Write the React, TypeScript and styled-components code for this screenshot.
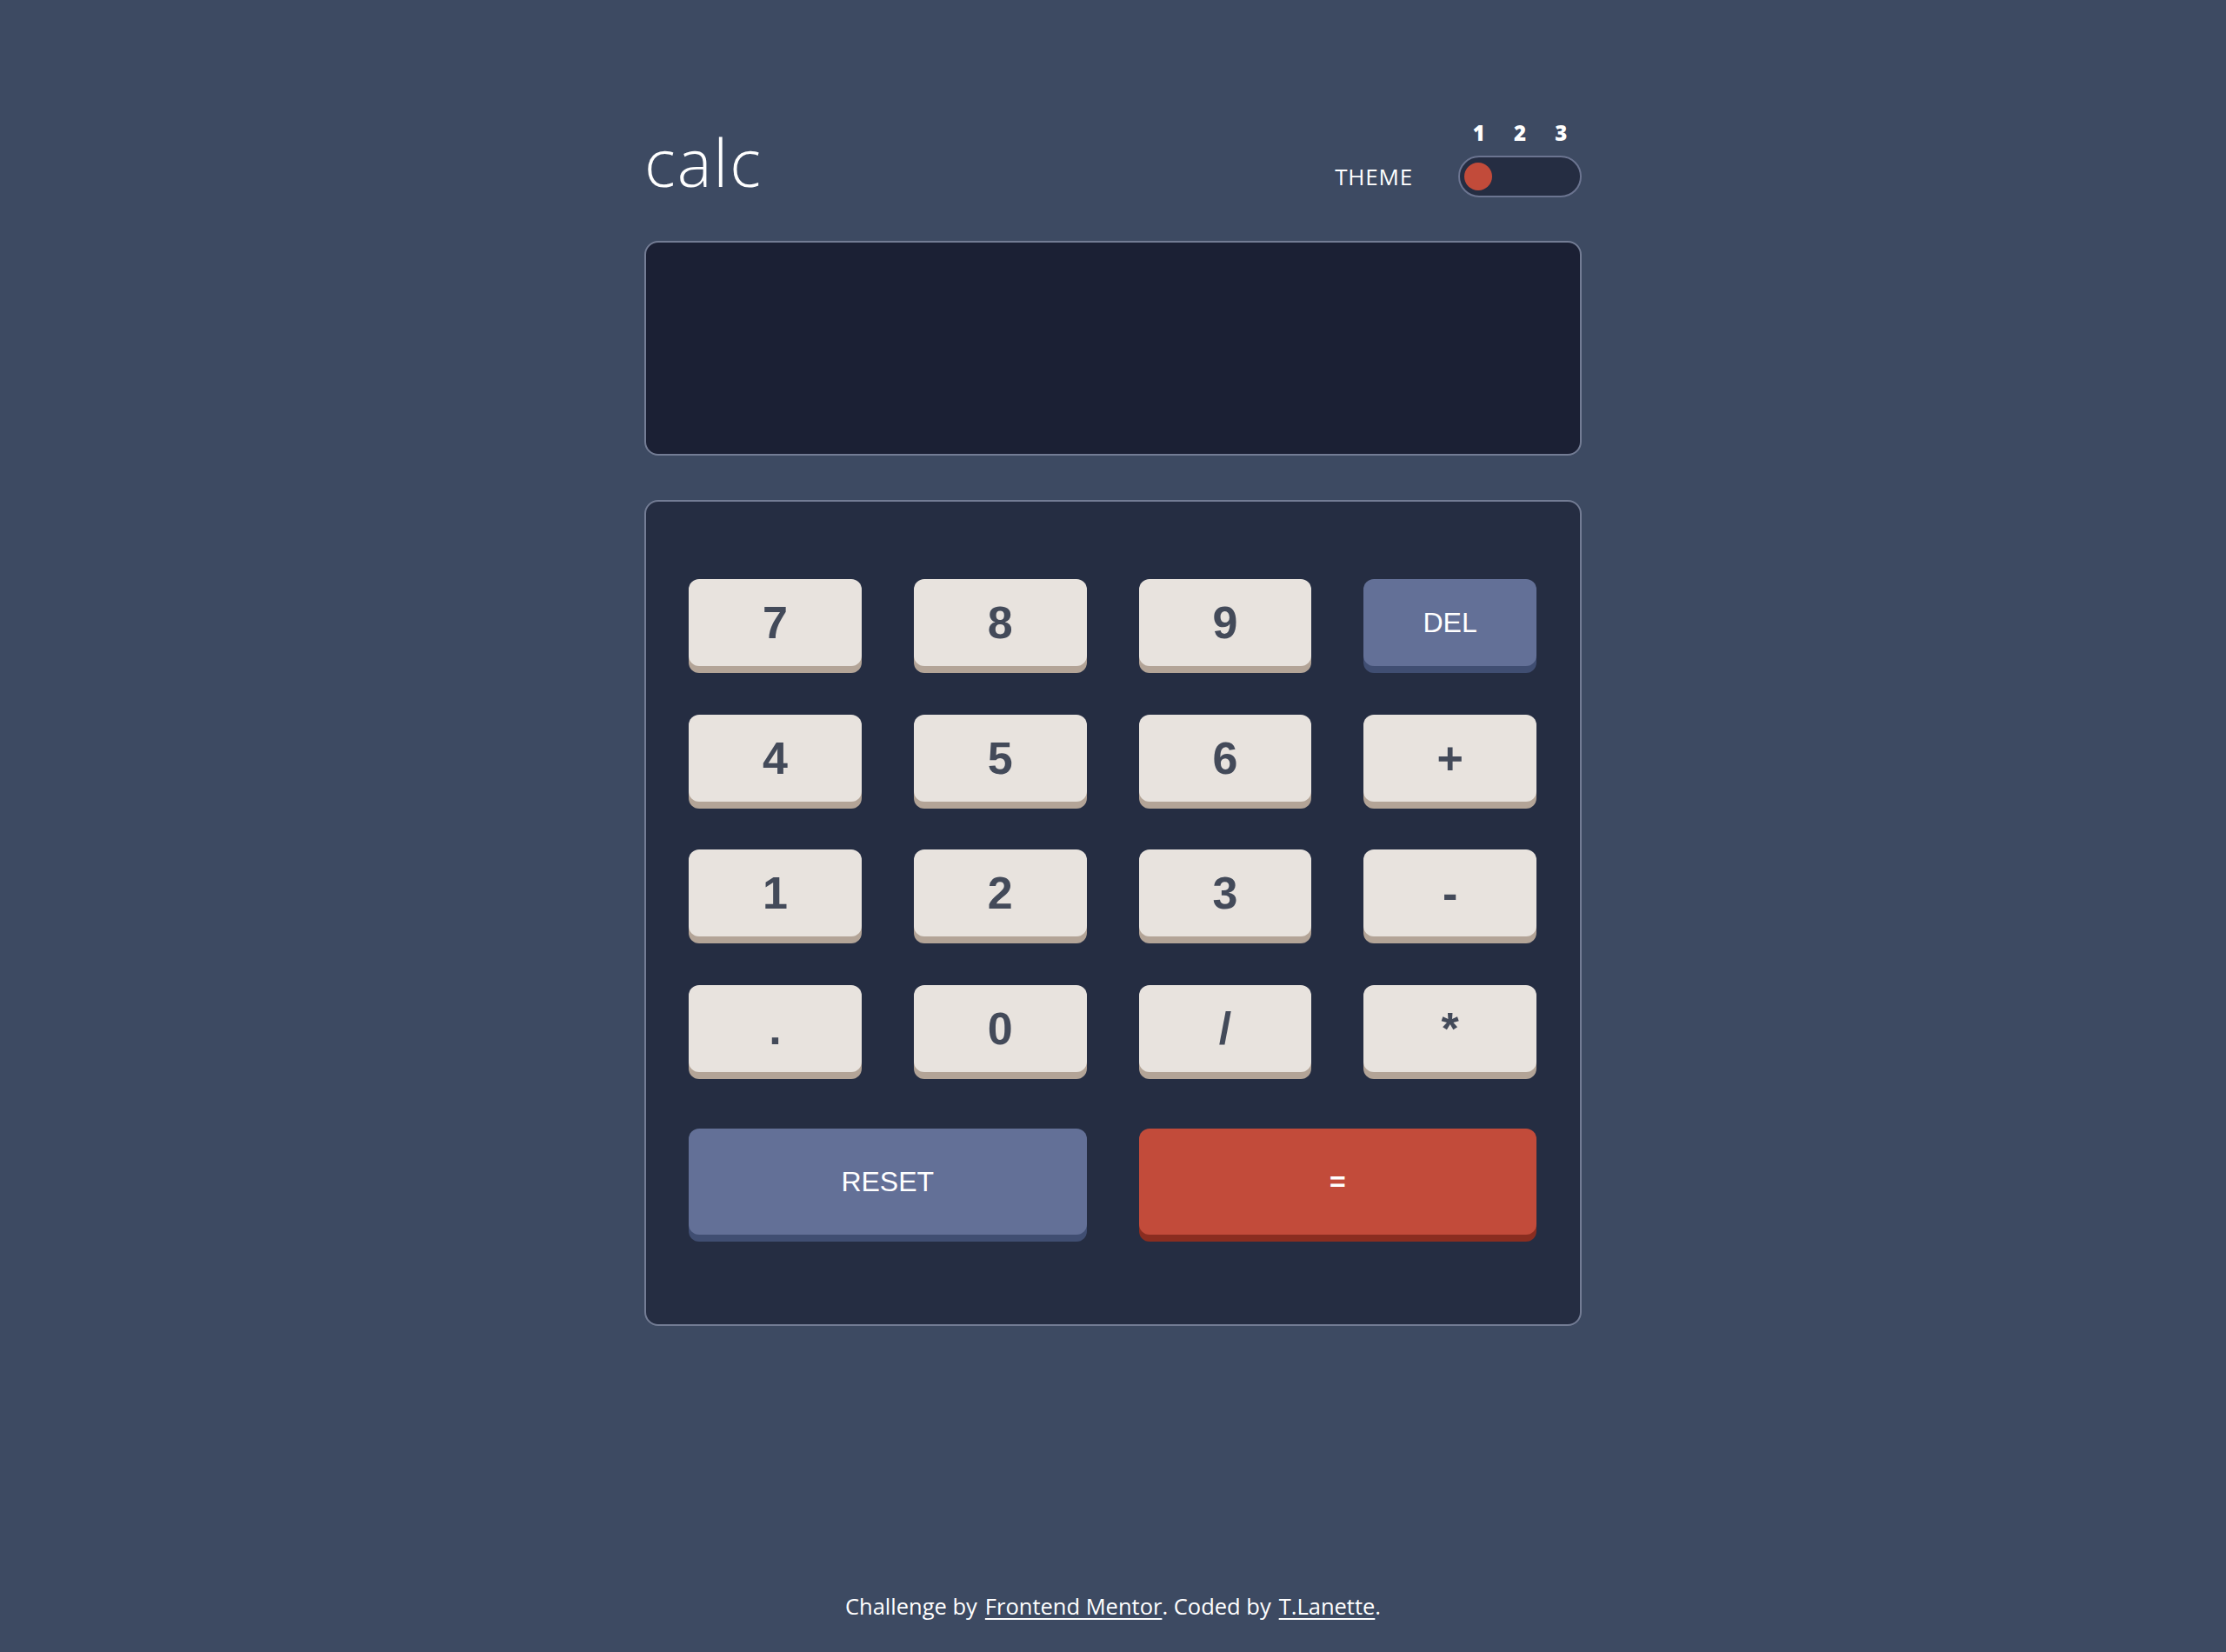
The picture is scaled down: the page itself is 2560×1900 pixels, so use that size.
import React from "react";
import styled, { createGlobalStyle } from "styled-components";

const GlobalStyle = createGlobalStyle`
  html, body {
    margin: 0;
    padding: 0;
    background: #3d4a62;
  }
  body {
    font-family: "Open Sans", "Liberation Sans", sans-serif;
    color: #ffffff;
  }
  * { box-sizing: border-box; }
`;

const Page = styled.div`
  display: flex;
  flex-direction: column;
  align-items: center;
  min-height: 1900px;
  background: #3d4a62;
`;

const Main = styled.main`
  width: 1078px;
  padding-top: 141px;
  display: flex;
  flex-direction: column;
`;

const Header = styled.header`
  display: flex;
  justify-content: space-between;
  align-items: flex-end;
  margin-bottom: 50px;
`;

const Logo = styled.h1`
  margin: 0 0 3px 0;
  font-family: "Open Sans", sans-serif;
  font-weight: 300;
  font-size: 75px;
  line-height: 75px;
  letter-spacing: 2px;
  color: #ffffff;
`;

const ThemeBox = styled.div`
  display: flex;
  align-items: flex-end;
  gap: 52px;
`;

const ThemeLabel = styled.span`
  font-family: "Open Sans", sans-serif;
  font-size: 26px;
  font-weight: 400;
  letter-spacing: 0.8px;
  height: 48px;
  line-height: 48px;
  color: #ffffff;
`;

const SwitchCol = styled.div`
  display: flex;
  flex-direction: column;
  width: 142px;
`;

const Numbers = styled.div`
  display: grid;
  grid-template-columns: repeat(3, 1fr);
  margin-bottom: 14px;
`;

const Num = styled.span`
  text-align: center;
  font-family: "Open Sans", sans-serif;
  font-weight: 800;
  font-size: 24px;
  line-height: 24px;
  color: #ffffff;
`;

const Track = styled.div`
  height: 48px;
  border-radius: 24px;
  border: 2px solid #6b7490;
  background: #252d42;
  display: flex;
  align-items: center;
  padding-left: 5px;
`;

const Knob = styled.div`
  width: 32px;
  height: 32px;
  border-radius: 50%;
  background: #c24b3a;
`;

const Screen = styled.div`
  height: 247px;
  border-radius: 16px;
  border: 2px solid #737c94;
  background: #1b2034;
  margin-bottom: 51px;
`;

const Keypad = styled.div`
  height: 950px;
  border-radius: 16px;
  border: 2px solid #737c94;
  background: #252d42;
  padding: 89px 50px 0 49px;
  display: grid;
  grid-template-columns: repeat(4, 1fr);
  grid-template-rows: repeat(4, 100px) 132px;
  column-gap: 60px;
  row-gap: 55.5px;
  align-content: start;
`;

type Variant = "num" | "fn" | "eq";

const faces: Record<Variant, { bg: string; shadow: string; color: string }> = {
  num: { bg: "#e8e3de", shadow: "#b3a497", color: "#434a59" },
  fn: { bg: "#637097", shadow: "#404e72", color: "#ffffff" },
  eq: { bg: "#c24b3a", shadow: "#8a2d20", color: "#ffffff" },
};

const Key = styled.button<{ $v: Variant; $wide?: boolean; $small?: boolean; $bold?: boolean }>`
  border: none;
  border-radius: 12px;
  cursor: pointer;
  display: flex;
  align-items: center;
  justify-content: center;
  padding: 0;
  font-family: "Liberation Sans", Arial, sans-serif;
  font-weight: ${(p) => (p.$bold ? 700 : 400)};
  font-size: ${(p) => (p.$small ? "32px" : "52px")};
  background: ${(p) => faces[p.$v].bg};
  color: ${(p) => faces[p.$v].color};
  box-shadow: 0 8px 0 ${(p) => faces[p.$v].shadow};
  grid-column: ${(p) => (p.$wide ? "span 2" : "auto")};
  height: ${(p) => (p.$wide ? "122px" : "100px")};
  align-self: end;
`;

const Footer = styled.footer`
  margin-top: 307px;
  font-family: "Open Sans", sans-serif;
  font-size: 25.5px;
  line-height: 30px;
  color: #ffffff;
`;

const FootLink = styled.a`
  color: #ffffff;
  margin-left: 9px;
  text-decoration: underline;
  text-underline-offset: 4px;
`;

const keys: string[] = ["7", "8", "9", "DEL", "4", "5", "6", "+", "1", "2", "3", "-", ".", "0", "/", "*"];

export default function App() {
  return (
    <>
      <GlobalStyle />
      <Page>
        <Main>
          <Header>
            <Logo>calc</Logo>
            <ThemeBox>
              <ThemeLabel>THEME</ThemeLabel>
              <SwitchCol>
                <Numbers>
                  <Num>1</Num>
                  <Num>2</Num>
                  <Num>3</Num>
                </Numbers>
                <Track>
                  <Knob />
                </Track>
              </SwitchCol>
            </ThemeBox>
          </Header>
          <Screen />
          <Keypad>
            {keys.map((k) =>
              k === "DEL" ? (
                <Key key={k} $v="fn" $small>
                  {k}
                </Key>
              ) : (
                <Key key={k} $v="num" $bold>
                  {k}
                </Key>
              )
            )}
            <Key $v="fn" $wide $small>
              RESET
            </Key>
            <Key $v="eq" $wide $small $bold>
              =
            </Key>
          </Keypad>
        </Main>
        <Footer>
          Challenge by<FootLink href="#">Frontend Mentor</FootLink>. Coded by
          <FootLink href="#">T.Lanette</FootLink>.
        </Footer>
      </Page>
    </>
  );
}
